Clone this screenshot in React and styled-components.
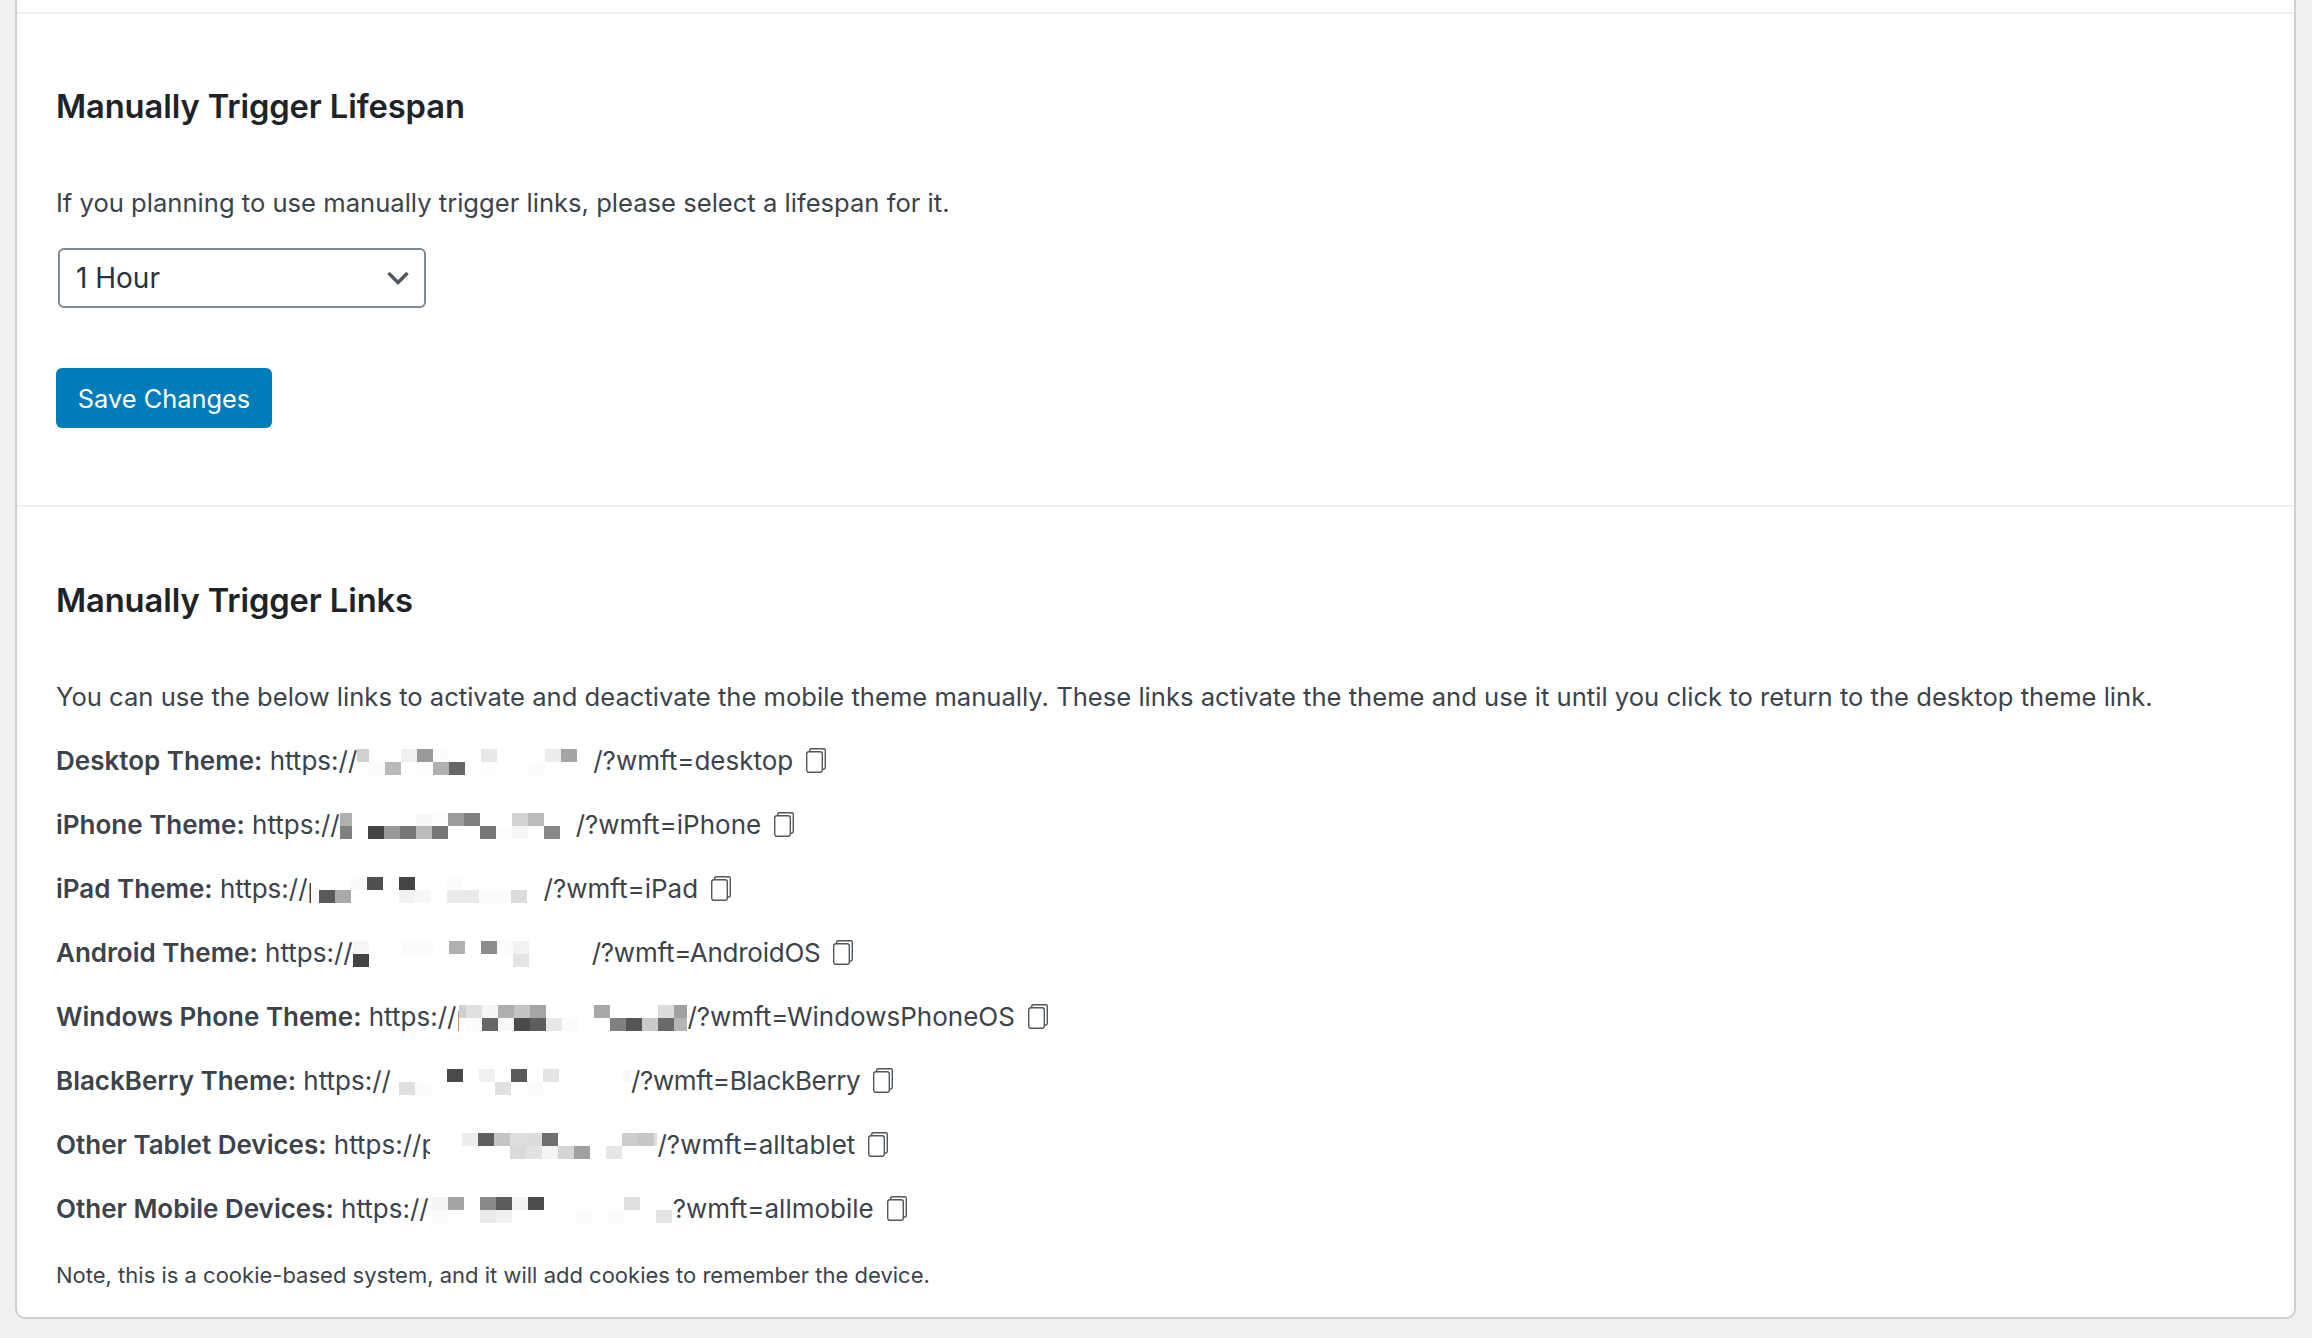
import styled, { createGlobalStyle } from "styled-components";

const GlobalStyle = createGlobalStyle`
  html, body {
    margin: 0;
    padding: 0;
    background: #f0f0f1;
  }
  body {
    font-family: Inter, "Liberation Sans", sans-serif;
    color: #3c434a;
  }
`;

const Page = styled.div`
  height: 1338px;
  padding: 0 16px 0 15px;
  box-sizing: border-box;
  overflow: hidden;
`;

const Card = styled.div`
  background: #fff;
  border: 2px solid #ccd0d4;
  border-top: 0;
  border-radius: 0 0 10px 10px;
  height: 1319px;
  box-sizing: border-box;
`;

const TopStrip = styled.div`
  height: 12px;
  border-bottom: 2px solid #f0f0f1;
`;

const Section = styled.section`
  padding: 0 39px;
  border-bottom: ${(p) => (p.$last ? "0" : "2px solid #f0f0f1")};
  height: ${(p) => p.$height}px;
  box-sizing: border-box;
`;

const Heading = styled.h2`
  margin: 0;
  padding-top: ${(p) => p.$top}px;
  font-size: 32.7px;
  line-height: 44px;
  font-weight: 600;
  color: #1d2327;
  letter-spacing: -0.1px;
`;

const Text = styled.p`
  margin: 53px 0 0;
  font-size: 25.6px;
  line-height: 44px;
`;

const SelectBox = styled.div`
  margin: 23px 0 0 2px;
  width: 368px;
  height: 60px;
  box-sizing: border-box;
  padding: 0 14px 0 16px;
  display: flex;
  align-items: center;
  justify-content: space-between;
  background: #fff;
  border: 2px solid #7e8993;
  border-radius: 6px;
  font-size: 28px;
  color: #2c3338;
`;

const SaveButton = styled.button`
  display: block;
  margin-top: 60px;
  width: 216px;
  height: 60px;
  padding: 0;
  border: 0;
  border-radius: 6px;
  background: #007cba;
  color: #fff;
  font-family: inherit;
  font-size: 25.4px;
`;

const LinkList = styled.div`
  margin-top: 10px;
`;

const LinkRow = styled.div`
  height: 64px;
  font-size: 26px;
  line-height: 64px;
  white-space: nowrap;
`;

const Label = styled.strong`
  font-weight: 600;
`;

const CutLetter = styled.span`
  display: inline-block;
  width: ${(p) => p.$width}px;
  overflow: clip;
`;

const Query = styled.span`
  letter-spacing: ${(p) => p.$tight || 0}px;
`;

const MosaicSvg = styled.svg`
  vertical-align: middle;
  margin-top: -2px;
`;

const CopySvg = styled.svg`
  vertical-align: middle;
  margin: -5px 0 0 13px;
`;

const Note = styled.p`
  margin: 12px 0 0;
  font-size: 22px;
  line-height: 44px;
`;

function Chevron() {
  return (
    <svg width="24" height="16" viewBox="0 0 24 16" fill="none">
      <path d="M2.5 3 12 12.5 21.5 3" stroke="#50575e" strokeWidth="3.4" />
    </svg>
  );
}

function CopyIcon() {
  return (
    <CopySvg width="20" height="25" viewBox="0 0 20 25" fill="none" stroke="#50575e" strokeWidth="1.4">
      <rect x="0.7" y="3.7" width="15.6" height="20.6" rx="2.2" />
      <path d="M3.7 3.5V2.2q0-1.5 1.5-1.5h12.6q1.5 0 1.5 1.5v17q0 1.8-2.7 2" />
    </CopySvg>
  );
}

function Mosaic({ width, shift = 0, top = {}, bottom = {} }) {
  const cells = [
    ...Object.entries(top).map(([col, g]) => ({ col, g, y: 0 })),
    ...Object.entries(bottom).map(([col, g]) => ({ col, g, y: 13 })),
  ];
  return (
    <MosaicSvg width={width} height="26" viewBox={`0 0 ${width} 26`}>
      {cells.map(({ col, g, y }) => (
        <rect key={col + "-" + y} x={col * 16 - shift} y={y} width="16" height="13" fill={`#${g}${g}${g}`} />
      ))}
    </MosaicSvg>
  );
}

const links = [
  {
    label: "Desktop Theme:", query: "/?wmft=desktop",
    mosaic: { width: 236, shift: 4,
      top: { 0: "d0", 3: "f0", 4: "99", 5: "fc", 8: "e8", 12: "ec", 13: "a5" },
      bottom: { 1: "fb", 2: "b8", 4: "fc", 5: "b0", 6: "66", 8: "fd", 11: "fb" } },
  },
  {
    label: "iPhone Theme:", query: "/?wmft=iPhone",
    mosaic: { width: 236, shift: 4,
      top: { 0: "b0", 5: "f8", 6: "fd", 7: "9c", 8: "80", 11: "d2", 12: "bb" },
      bottom: { 0: "80", 2: "44", 3: "99", 4: "77", 5: "bb", 6: "77", 9: "77", 10: "fc", 11: "f6", 13: "88" } },
  },
  {
    label: "iPad Theme:", query: "/?wmft=iPad", cut: 3,
    mosaic: { width: 233, shift: 8,
      top: { 3: "fa", 4: "50", 6: "44", 9: "fb" },
      bottom: { 1: "5a", 2: "aa", 6: "f2", 7: "f8", 9: "e9", 10: "e9", 11: "fb", 12: "fb", 13: "dc" } },
  },
  {
    label: "Android Theme:", query: "/?wmft=AndroidOS", tight: -0.25,
    mosaic: { width: 239, shift: 0,
      top: { 0: "f6", 3: "fb", 4: "fb", 6: "b0", 8: "8c", 9: "fc", 10: "f2" },
      bottom: { 0: "44", 10: "e4" } },
  },
  {
    label: "Windows Phone Theme:", query: "/?wmft=WindowsPhoneOS", cut: 3,
    mosaic: { width: 228, shift: 9,
      top: { 0: "d0", 1: "e0", 2: "f5", 3: "ae", 4: "c4", 5: "a6", 9: "a8", 13: "dc", 14: "a0" },
      bottom: { 1: "fb", 2: "66", 3: "f8", 4: "4a", 5: "5e", 6: "e8", 7: "fb", 10: "80", 11: "55", 12: "ca", 13: "6a", 14: "b5" } },
  },
  {
    label: "BlackBerry Theme:", query: "/?wmft=BlackBerry", tight: -0.35,
    mosaic: { width: 240, shift: 8,
      top: { 4: "4a", 6: "f0", 8: "5a", 10: "e4", 15: "f8" },
      bottom: { 1: "e0", 2: "fb", 7: "e0", 9: "fb" } },
  },
  {
    label: "Other Tablet Devices:", query: "/?wmft=alltablet", cut: 9,
    mosaic: { width: 227, shift: 0,
      top: { 2: "ed", 3: "5f", 4: "c4", 5: "de", 6: "dc", 7: "6e", 12: "cd", 13: "c6", 14: "dc" },
      bottom: { 5: "da", 6: "e2", 7: "f4", 8: "d4", 9: "a0", 11: "e6" } },
  },
  {
    label: "Other Mobile Devices:", query: "?wmft=allmobile",
    mosaic: { width: 244, shift: -3,
      top: { 0: "f5", 1: "a5", 3: "88", 4: "5c", 5: "f3", 6: "4c", 12: "e0" },
      bottom: { 0: "fb", 3: "ea", 4: "f0", 9: "fb", 11: "fb", 14: "e4" } },
  },
];

export default function App() {
  return (
    <Page>
      <GlobalStyle />
      <Card>
        <TopStrip />
        <Section $height={493}>
          <Heading $top={70}>Manually Trigger Lifespan</Heading>
          <Text>If you planning to use manually trigger links, please select a lifespan for it.</Text>
          <SelectBox>
            1 Hour
            <Chevron />
          </SelectBox>
          <SaveButton>Save Changes</SaveButton>
        </Section>
        <Section $last $height={800}>
          <Heading $top={71}>Manually Trigger Links</Heading>
          <Text>You can use the below links to activate and deactivate the mobile theme manually. These links activate the theme and use it until you click to return to the desktop theme link.</Text>
          <LinkList>
            {links.map((link) => (
              <LinkRow key={link.label}>
                <Label>{link.label}</Label> https://
                {link.cut && <CutLetter $width={link.cut}>p</CutLetter>}
                <Mosaic {...link.mosaic} />
                <Query $tight={link.tight}>{link.query}</Query>
                <CopyIcon />
              </LinkRow>
            ))}
          </LinkList>
          <Note>Note, this is a cookie-based system, and it will add cookies to remember the device.</Note>
        </Section>
      </Card>
    </Page>
  );
}
